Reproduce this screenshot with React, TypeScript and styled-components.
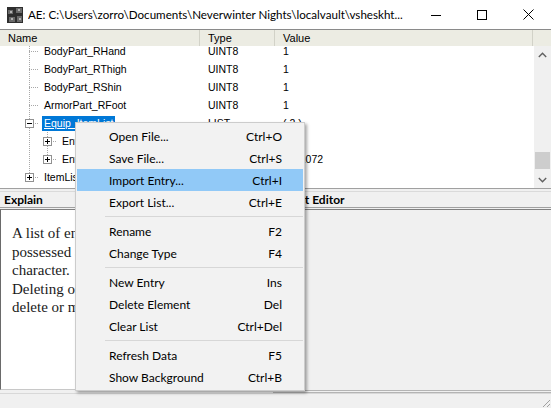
import * as React from 'react';
import styled, { createGlobalStyle } from 'styled-components';

const UI = '"Lato", "Liberation Sans", sans-serif';
const TREE = '"Liberation Sans", Arial, sans-serif';

const GlobalStyle = createGlobalStyle`
  html, body {
    margin: 0;
    padding: 0;
    background: #f0f0f0;
    overflow: hidden;
  }
`;

type TreeRow = {
  name: string;
  type: string;
  value: string;
  level: 1 | 2;
  expander?: 'plus' | 'minus';
  selected?: boolean;
  last?: boolean;
};

const rows: TreeRow[] = [
  { name: 'BodyPart_RHand', type: 'UINT8', value: '1', level: 1 },
  { name: 'BodyPart_RThigh', type: 'UINT8', value: '1', level: 1 },
  { name: 'BodyPart_RShin', type: 'UINT8', value: '1', level: 1 },
  { name: 'ArmorPart_RFoot', type: 'UINT8', value: '1', level: 1 },
  { name: 'Equip_ItemList', type: 'LIST', value: '( 2 )', level: 1, expander: 'minus', selected: true },
  { name: 'Entry 0', type: 'STRUCT', value: '16', level: 2, expander: 'plus' },
  { name: 'Entry 1', type: 'STRUCT', value: '1131072', level: 2, expander: 'plus', last: true },
  { name: 'ItemList', type: 'LIST', value: '( 3 )', level: 1, expander: 'plus', last: true },
];

type MenuEntry = { label: string; keys: string; hot?: boolean } | 'sep';

const menu: MenuEntry[] = [
  { label: 'Open File...', keys: 'Ctrl+O' },
  { label: 'Save File...', keys: 'Ctrl+S' },
  { label: 'Import Entry...', keys: 'Ctrl+I', hot: true },
  { label: 'Export List...', keys: 'Ctrl+E' },
  'sep',
  { label: 'Rename', keys: 'F2' },
  { label: 'Change Type', keys: 'F4' },
  'sep',
  { label: 'New Entry', keys: 'Ins' },
  { label: 'Delete Element', keys: 'Del' },
  { label: 'Clear List', keys: 'Ctrl+Del' },
  'sep',
  { label: 'Refresh Data', keys: 'F5' },
  { label: 'Show Background', keys: 'Ctrl+B' },
];

const dotsV = 'repeating-linear-gradient(to bottom, #a8a8a8 0 1px, transparent 1px 2px)';
const dotsH = 'repeating-linear-gradient(to right, #a8a8a8 0 1px, transparent 1px 2px)';

export default function App() {
  return (
    <>
      <GlobalStyle />
      <Window>
        <TitleBar>
          <AppIcon width="16" height="16" viewBox="0 0 16 16">
            <rect width="16" height="16" fill="#2e2e2e" />
            <path d="M1 3h5v4H1zM9 1h6v5H9zM2 10h6v5H2zM10 9h5v6h-5z" fill="#6a6a6a" />
            <path d="M3 4h2v2H3zM11 2h2v2h-2zM4 11h2v2H4zM12 11h2v2h-2z" fill="#b4b4b4" />
          </AppIcon>
          <Caption>{'AE: C:\\Users\\zorro\\Documents\\Neverwinter Nights\\localvault\\vsheskht...'}</Caption>
          <CaptionButton>
            <svg width="10" height="10" viewBox="0 0 10 10">
              <path d="M0 5.5h10" stroke="#000" strokeWidth="1" />
            </svg>
          </CaptionButton>
          <CaptionButton>
            <svg width="10" height="10" viewBox="0 0 10 10">
              <rect x="0.5" y="0.5" width="9" height="9" fill="none" stroke="#000" strokeWidth="1" />
            </svg>
          </CaptionButton>
          <CaptionButton>
            <svg width="11" height="11" viewBox="0 0 11 11">
              <path d="M0.5 0.5l10 10M10.5 0.5l-10 10" stroke="#000" strokeWidth="1" />
            </svg>
          </CaptionButton>
        </TitleBar>

        <TreePanel>
          <HeaderRow>
            <HeaderCell>Name</HeaderCell>
            <HeaderCell>Type</HeaderCell>
            <HeaderCell>Value</HeaderCell>
            <HeaderCell />
          </HeaderRow>
          <TreeBody>
            <TreeList>
              {rows.map((row, i) => (
                <Row key={i}>
                  <NameCell>
                    {row.level === 2 && <Rail />}
                    <Connector $last={row.last}>
                      {row.expander && (
                        <svg width="9" height="9" viewBox="0 0 9 9">
                          <rect x="0.5" y="0.5" width="8" height="8" fill="#fff" stroke="#919191" />
                          <path d="M2 4.5h5" stroke="#000" />
                          {row.expander === 'plus' && <path d="M4.5 2v5" stroke="#000" />}
                        </svg>
                      )}
                    </Connector>
                    <Label $selected={row.selected}>{row.name}</Label>
                  </NameCell>
                  <Cell>{row.type}</Cell>
                  <Cell>{row.value}</Cell>
                </Row>
              ))}
            </TreeList>
            <ScrollBar>
              <ArrowButton>
                <svg width="9" height="6" viewBox="0 0 9 6">
                  <path d="M0.8 5L4.5 1.3 8.2 5" fill="none" stroke="#606060" strokeWidth="1.4" />
                </svg>
              </ArrowButton>
              <Track>
                <Thumb />
              </Track>
              <ArrowButton>
                <svg width="9" height="6" viewBox="0 0 9 6">
                  <path d="M0.8 1L4.5 4.7 8.2 1" fill="none" stroke="#606060" strokeWidth="1.4" />
                </svg>
              </ArrowButton>
            </ScrollBar>
          </TreeBody>
        </TreePanel>

        <Lower>
          <ExplainPane>
            <PaneHeader>Explain</PaneHeader>
            <ExplainBody>
              A list of entries for the items<br />
              possessed and equipped by this<br />
              character.<br />
              Deleting or changing an entry will<br />
              delete or move the item.
            </ExplainBody>
          </ExplainPane>
          <EditorPane>
            <PaneHeader>Struct Editor</PaneHeader>
            <EditorBody />
          </EditorPane>
        </Lower>

        <StatusBar>
          <svg width="12" height="12" viewBox="0 0 12 12">
            <path d="M11 4L4 11M11 8L8 11" stroke="#a0a0a0" strokeWidth="1" />
          </svg>
        </StatusBar>

        <ContextMenu>
          {menu.map((item, i) =>
            item === 'sep' ? (
              <Separator key={i} />
            ) : (
              <MenuItem key={i} $hot={item.hot}>
                <span>{item.label}</span>
                <span>{item.keys}</span>
              </MenuItem>
            )
          )}
        </ContextMenu>
      </Window>
    </>
  );
}

const Window = styled.div`
  position: relative;
  width: 551px;
  height: 408px;
  display: flex;
  flex-direction: column;
  background: #f0f0f0;
  font-family: ${UI};
  color: #000;
  overflow: hidden;
`;

const TitleBar = styled.div`
  flex: none;
  height: 29px;
  display: flex;
  align-items: center;
  background: #fff;
`;

const AppIcon = styled.svg`
  flex: none;
  margin: 0 5px 0 7px;
`;

const Caption = styled.div`
  flex: 1;
  font-size: 11.6px;
  white-space: nowrap;
  overflow: hidden;
`;

const CaptionButton = styled.div`
  flex: none;
  width: 46px;
  height: 29px;
  display: flex;
  align-items: center;
  justify-content: center;
`;

const TreePanel = styled.div`
  flex: none;
  height: 158px;
  display: flex;
  flex-direction: column;
  background: #fff;
  border-top: 1px solid #8a8a8a;
  border-bottom: 1px solid #a0a0a0;
`;

const HeaderRow = styled.div`
  flex: none;
  height: 16px;
  display: grid;
  grid-template-columns: 200px 75px 258px 1fr;
  background: #ececE3;
  font-family: ${TREE};
  font-size: 11px;
`;

const HeaderCell = styled.div`
  padding-left: 8px;
  line-height: 16px;
  border-right: 1px solid #d2d2c8;
  &:last-child {
    border-right: none;
  }
`;

const TreeBody = styled.div`
  flex: 1;
  display: flex;
  min-height: 0;
`;

const TreeList = styled.div`
  flex: 1;
  overflow: hidden;
  & > :first-child {
    margin-top: -4px;
  }
`;

const Row = styled.div`
  height: 18px;
  display: grid;
  grid-template-columns: 200px 75px 1fr;
  align-items: center;
  font-family: ${TREE};
  font-size: 10.5px;
  white-space: nowrap;
`;

const NameCell = styled.div`
  height: 18px;
  display: flex;
  align-items: center;
  padding-left: 20px;
`;

const Rail = styled.span`
  flex: none;
  width: 18px;
  height: 18px;
  background: ${dotsV} 9px 0 / 1px 100% no-repeat;
`;

const Connector = styled.span<{ $last?: boolean }>`
  flex: none;
  width: 18px;
  height: 18px;
  display: flex;
  align-items: center;
  justify-content: center;
  background:
    ${dotsV} 9px 0 / 1px ${(p) => (p.$last ? '9px' : '100%')} no-repeat,
    ${dotsH} 9px 9px / 9px 1px no-repeat;
  & svg {
    margin-left: 1px;
  }
`;

const Label = styled.span<{ $selected?: boolean }>`
  margin-left: 4px;
  padding: 1px 2px;
  line-height: 13px;
  background: ${(p) => (p.$selected ? '#0078d7' : 'transparent')};
  color: ${(p) => (p.$selected ? '#fff' : '#000')};
  text-decoration: ${(p) => (p.$selected ? 'underline' : 'none')};
`;

const Cell = styled.div`
  padding-left: 8px;
`;

const ScrollBar = styled.div`
  flex: none;
  width: 17px;
  display: flex;
  flex-direction: column;
  background: #f0f0f0;
`;

const ArrowButton = styled.div`
  flex: none;
  height: 17px;
  display: flex;
  align-items: center;
  justify-content: center;
`;

const Track = styled.div`
  flex: 1;
  display: flex;
  flex-direction: column;
  justify-content: flex-end;
  padding-bottom: 2px;
`;

const Thumb = styled.div`
  height: 17px;
  margin: 0 1px;
  background: #cdcdcd;
`;

const Lower = styled.div`
  flex: none;
  height: 202px;
  margin-top: 2px;
  display: flex;
`;

const ExplainPane = styled.div`
  flex: none;
  width: 273px;
  display: flex;
  flex-direction: column;
`;

const EditorPane = styled.div`
  flex: 1;
  display: flex;
  flex-direction: column;
`;

const PaneHeader = styled.div`
  flex: none;
  height: 15px;
  padding-left: 4px;
  border-top: 1px solid #dadada;
  border-bottom: 1px solid #a0a0a0;
  font-size: 12px;
  font-weight: 700;
  line-height: 15px;
  white-space: nowrap;
`;

const ExplainBody = styled.div`
  flex: 1;
  margin: 1px 0 3px;
  padding: 14px 8px 0 11px;
  background: #fff;
  border-top: 1px solid #808080;
  border-left: 1px solid #6a6a6a;
  border-bottom: 1px solid #c8c8c8;
  font-family: "Liberation Serif", "Times New Roman", serif;
  font-size: 15px;
  line-height: 18.6px;
  color: #1a1a1a;
  white-space: nowrap;
  overflow: hidden;
`;

const EditorBody = styled.div`
  flex: 1;
  margin: 1px 0 0;
  border-top: 1px solid #808080;
  border-bottom: 3px double #b4b4b4;
  background: #f0f0f0;
`;

const StatusBar = styled.div`
  flex: 1;
  display: flex;
  justify-content: flex-end;
  align-items: flex-end;
  border-top: 1px solid #d8d8d8;
`;

const ContextMenu = styled.div`
  position: absolute;
  left: 75px;
  top: 122px;
  width: 226px;
  padding: 2px 1px;
  background: #f2f2f2;
  border: 1px solid #cccccc;
  box-shadow: 2px 2px 3px rgba(0, 0, 0, 0.35);
  font-family: ${UI};
  font-size: 12px;
`;

const MenuItem = styled.div<{ $hot?: boolean }>`
  height: 22px;
  display: flex;
  align-items: center;
  justify-content: space-between;
  padding: 0 21px 0 32px;
  background: ${(p) => (p.$hot ? '#91c9f7' : 'transparent')};
  color: #000;
  white-space: nowrap;
`;

const Separator = styled.div`
  height: 1px;
  margin: 3px 0 3px 28px;
  background: #d7d7d7;
`;
